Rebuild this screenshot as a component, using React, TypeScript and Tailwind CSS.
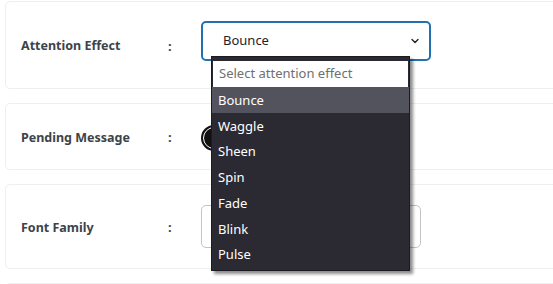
import { ChevronDown } from 'lucide-react';

const effects = ['Bounce', 'Waggle', 'Sheen', 'Spin', 'Fade', 'Blink', 'Pulse'];

function Label({ text }: { text: string }) {
  return (
    <div className="mt-[3px] flex items-center">
      <span className="w-[147px] text-[12.5px] font-bold text-[#3c434a]">{text}</span>
      <span className="w-[33px] text-[13px] font-bold text-[#3c434a]">:</span>
    </div>
  );
}

export default function App() {
  return (
    <div
      className="relative h-[284px] w-[553px] overflow-hidden bg-white"
      style={{ fontFamily: '"Noto Sans", "Open Sans", sans-serif' }}
    >
      <div className="flex w-[580px] flex-col gap-[14px] pl-[5px] pt-px">
        <div className="flex h-[88px] items-center rounded-[5px] border border-[#efefef] pl-[15px]">
          <Label text="Attention Effect" />
          <div className="-mt-[9px] flex h-[40px] w-[230px] items-center justify-between rounded-[5px] border-2 border-[#2271b1] pl-[20px] pr-[8px]">
            <span className="text-[13px] text-[#1d2327]">Bounce</span>
            <ChevronDown className="h-[12px] w-[12px] text-[#1d2327]" strokeWidth={2.75} />
          </div>
        </div>

        <div className="flex h-[67px] items-center rounded-[5px] border border-[#efefef] pl-[15px]">
          <Label text="Pending Message" />
          <div className="mt-[2px] h-[26px] w-[26px] rounded-full border-2 border-[#111] bg-[#111]">
            <div className="h-full w-full rounded-full border-[1.5px] border-white bg-[#111]" />
          </div>
        </div>

        <div className="flex h-[85px] items-center rounded-[5px] border border-[#efefef] pl-[15px]">
          <Label text="Font Family" />
          <div className="h-[43px] w-[220px] rounded-[5px] border border-[#c3c4c7]" />
        </div>

        <div className="h-[60px] rounded-[5px] border border-[#efefef]" />
      </div>

      <div className="absolute left-[211px] top-[56px] w-[199px] border border-[#1c1b22] bg-[#2b2a33] pb-[3px] pt-[4px] shadow-[3px_3px_3px_rgba(0,0,0,0.45)]">
        <div className="mx-px flex h-[26px] items-center bg-white px-[6px] text-[13px] text-[#6f6f6f]">
          Select attention effect
        </div>
        {effects.map((e, i) => (
          <div
            key={e}
            className={`flex h-[25.7px] items-center px-[6px] pt-[2px] text-[13px] text-white ${i === 0 ? 'bg-[#53535d]' : ''}`}
          >
            {e}
          </div>
        ))}
      </div>
    </div>
  );
}
